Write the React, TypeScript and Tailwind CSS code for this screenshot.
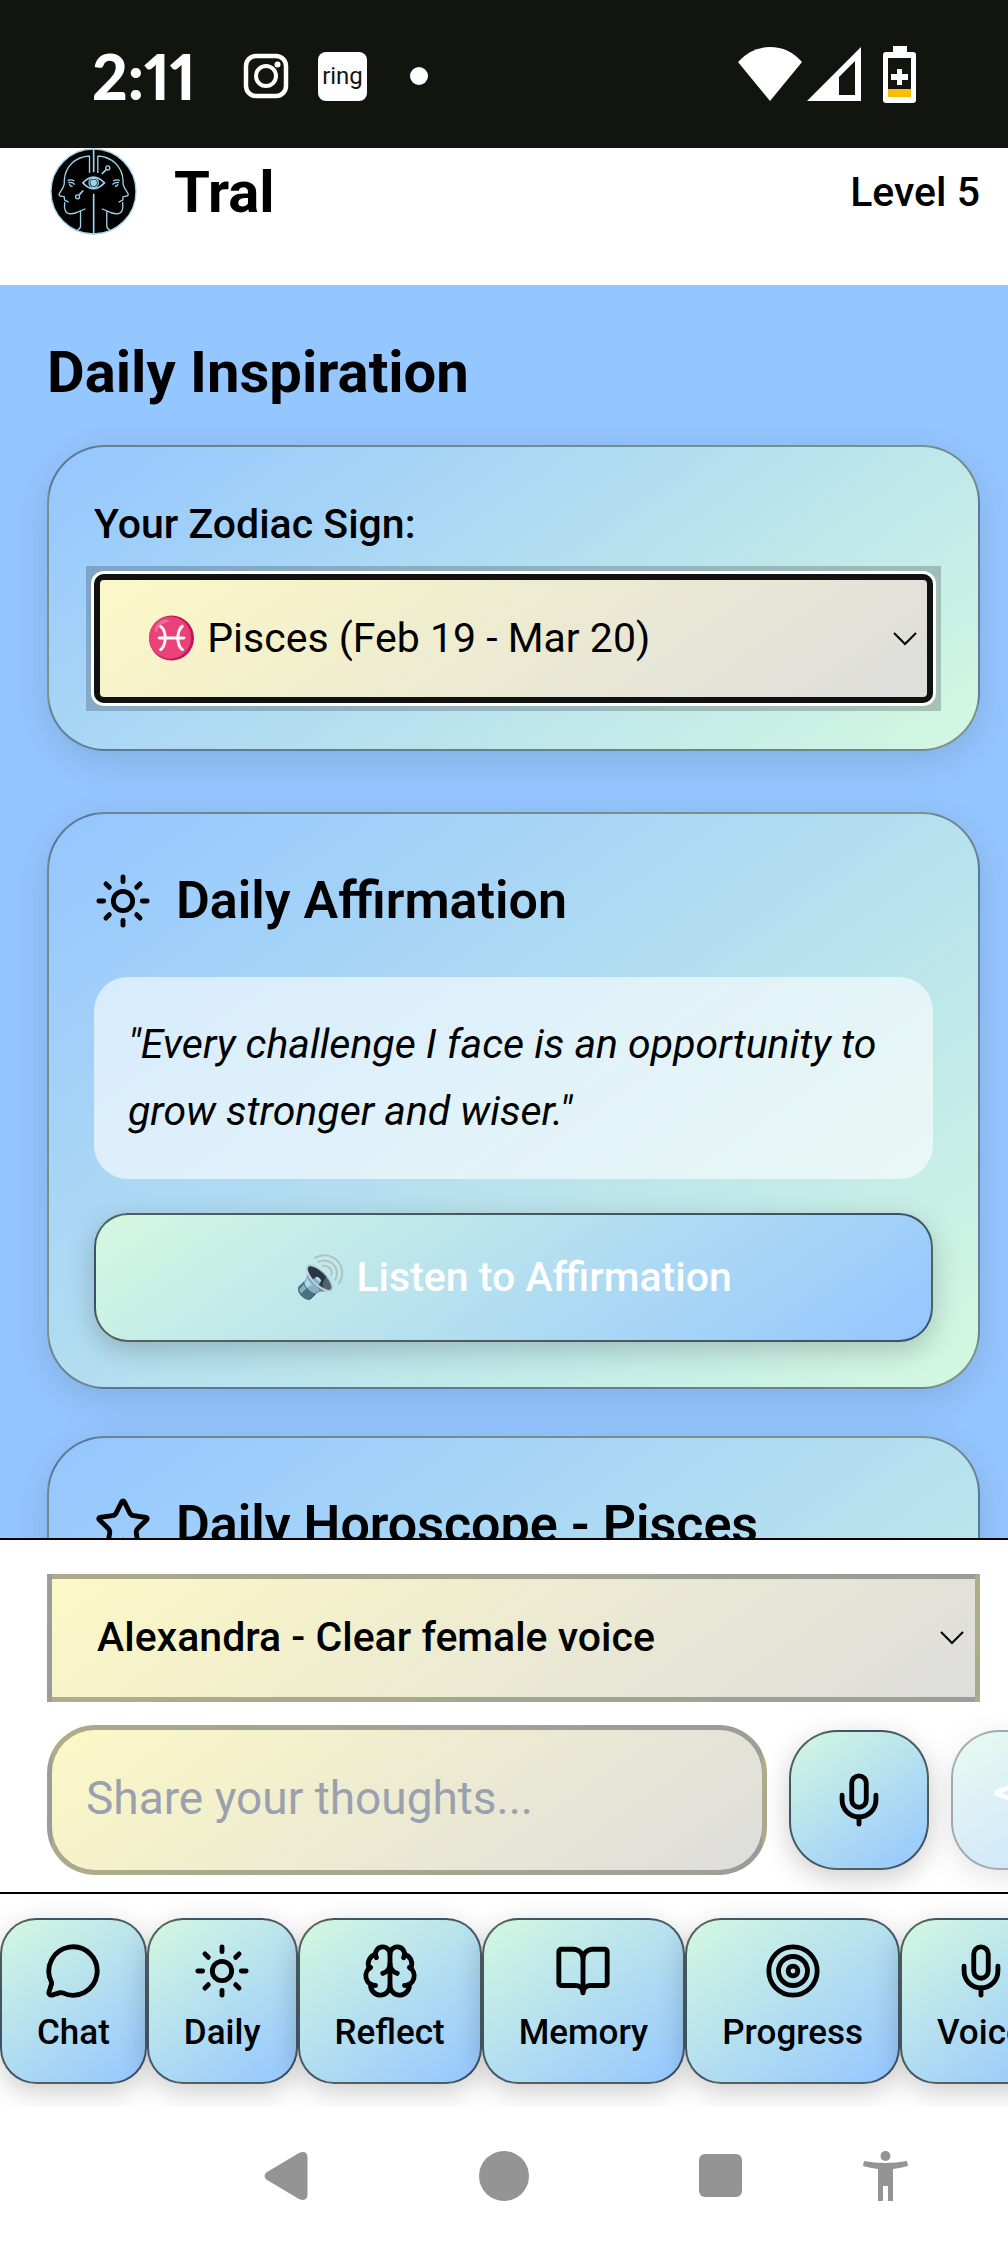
import React from "react";
import {
  BookOpen,
  Brain,
  MessageCircle,
  Mic,
  Send,
  Star,
  Sun,
  Target,
  type LucideIcon,
} from "lucide-react";

const CARD =
  "rounded-[58px] border-2 border-black/40 bg-[linear-gradient(145deg,#94c6ff,#d4f8e0)] px-[45px] pt-[45px] shadow-[0_10px_40px_rgba(0,0,0,0.12)]";
const ACTION =
  "border-2 border-black/60 bg-[linear-gradient(145deg,#d4f8e0,#94c6ff)] shadow-[0_8px_28px_rgba(0,0,0,0.2)]";
const FIELD = "bg-[linear-gradient(145deg,#fcf8c6,#dddddd)]";

function Logo() {
  const half = (
    <g>
      <path d="M118 75V24M118 24C78 26 44 54 42 98M42 98V106C42 120 26 134 26 141C28 147 38 145 42 147L43 157L55 163M43 163C44 174 40 178 45 188C50 201 62 200 78 195C88 191 96 188 106 183M91 190V236C91 242 85 246 80 249" />
      <path d="M52 98C60 94 66 96 72 99M54 104C62 102 68 104 74 110M58 108C58 114 62 116 67 115" />
    </g>
  );
  return (
    <svg viewBox="0 0 260 262" className="size-[87px]" role="img" aria-label="Tral logo">
      <circle cx="130" cy="131" r="128" fill="#000" stroke="#9ed2ea" strokeWidth="4" />
      <g fill="none" stroke="#9ed2ea" strokeWidth="4">
        {half}
        <g transform="matrix(-1 0 0 1 261 0)">{half}</g>
        <path d="M130.500 2V73M130.500 138V260" strokeWidth="5" />
        <path d="M155 78L168 66M99 128L87 141" strokeWidth="5" />
        <circle cx="173" cy="60" r="6" />
        <circle cx="82" cy="147" r="6" />
        <path d="M98 105Q130 70 163 105Q130 140 98 105Z" fill="#000" strokeWidth="5" />
        <circle cx="130.500" cy="105" r="14" />
        <circle cx="130.500" cy="105" r="8" fill="#9ed2ea" />
      </g>
    </svg>
  );
}

function StatusBar() {
  return (
    <div className="flex h-[148px] shrink-0 items-center justify-between bg-[#12140f] pr-[92px] pl-[92px] text-white">
      <div className="flex items-center pt-1">
        <span className="w-[103px] font-['Lato'] text-[62px] leading-[64px] font-black whitespace-nowrap proportional-nums">
          2:11
        </span>
        <svg viewBox="0 0 46 46" className="ml-12 size-[46px]" fill="none" stroke="currentColor" aria-hidden="true">
          <rect x="3" y="3" width="40" height="40" rx="10" strokeWidth="4.500" />
          <circle cx="23" cy="23" r="10" strokeWidth="4" />
          <circle cx="34.500" cy="11.500" r="3" fill="currentColor" stroke="none" />
        </svg>
        <span className="ml-[29px] flex size-[49px] items-center justify-center rounded-lg bg-white font-['Roboto',sans-serif] text-2xl text-[#12140f]">
          ring
        </span>
        <span className="ml-[43px] size-[18px] rounded-full bg-white" />
      </div>
      <div className="flex items-center" aria-hidden="true">
        <svg viewBox="0 0 64 54" className="h-[54px] w-16" fill="currentColor">
          <path d="M0 15Q13 0 32 0T64 15L32 54Z" />
        </svg>
        <svg viewBox="0 0 54 54" className="ml-[5px] size-[54px]" fill="currentColor" fillRule="evenodd">
          <path d="M0 54L54 0V54ZM32 30V48H48V14Z" />
        </svg>
        <svg viewBox="0 0 33 57" className="ml-[22px] h-[57px] w-[33px]">
          <path
            d="M10 0H24V6H30Q33 6 33 9V54Q33 57 30 57H3Q0 57 0 54V9Q0 6 3 6H10ZM5 12V51H28V12Z"
            fill="#fff"
            fillRule="evenodd"
          />
          <path d="M5 43H28V51H5Z" fill="#fbbc04" />
          <path d="M14 23H19V28H25V34H19V39H14V34H8V28H14Z" fill="#fff" />
        </svg>
      </div>
    </div>
  );
}

function Chevron({ className }: { className: string }) {
  return (
    <svg
      viewBox="0 0 24 14"
      className={`pointer-events-none absolute top-1/2 h-[14px] w-6 -translate-y-1/2 ${className}`}
      fill="none"
      stroke="#000"
      strokeWidth="2"
      aria-hidden="true"
    >
      <path d="M1 1L12 12L23 1" />
    </svg>
  );
}

function CardTitle({ icon: Icon, children }: { icon: LucideIcon; children: React.ReactNode }) {
  return (
    <h3 className="flex items-center gap-6 text-[52px] leading-[84px] font-semibold">
      <Icon className="size-[58px]" aria-hidden="true" />
      {children}
    </h3>
  );
}

const TABS: { label: string; icon: LucideIcon }[] = [
  { label: "Chat", icon: MessageCircle },
  { label: "Daily", icon: Sun },
  { label: "Reflect", icon: Brain },
  { label: "Memory", icon: BookOpen },
  { label: "Progress", icon: Target },
  { label: "Voice", icon: Mic },
];

export default function App() {
  return (
    <div className="flex h-screen flex-col overflow-hidden bg-white font-['Roboto','Noto_Color_Emoji',sans-serif] text-black">
      <StatusBar />

      <header className="flex shrink-0 items-center justify-between pr-7 pb-[50px] pl-[50px]">
        <div className="flex items-center gap-[37px]">
          <Logo />
          <h1 className="text-[58px] leading-[68px] font-bold">Tral</h1>
        </div>
        <span className="text-[41px] leading-[64px] font-medium">Level 5</span>
      </header>

      <main className="min-h-0 flex-1 overflow-hidden bg-[#94c6ff] pt-[47px] pr-7 pl-[47px]">
        <h2 className="mb-[33px] text-[58px] leading-[80px] font-bold">Daily Inspiration</h2>

        <section className={`${CARD} mb-[61px] pb-[38px]`}>
          <label htmlFor="zodiac" className="mb-[10px] block text-[41px] leading-[64px] font-medium">
            Your Zodiac Sign:
          </label>
          <div className="relative -mx-2 bg-black/20 p-2">
            <select
              id="zodiac"
              defaultValue="pisces"
              className={`${FIELD} block h-[129px] w-full appearance-none rounded-[10px] border-[6px] border-[#111] px-[46px] text-[41px] shadow-[0_0_0_3px_#fff] outline-none`}
            >
              <option value="pisces">♓ Pisces (Feb 19 - Mar 20)</option>
            </select>
            <Chevron className="right-6" />
          </div>
        </section>

        <section className={`${CARD} mb-[47px] pb-[45px]`}>
          <CardTitle icon={Sun}>Daily Affirmation</CardTitle>
          <p className="my-[34px] rounded-[34px] bg-white/60 p-[34px] text-[41px] leading-[67px] italic">
            "Every challenge I face is an opportunity to grow stronger and wiser."
          </p>
          <button type="button" className={`${ACTION} h-[129px] w-full rounded-[34px] text-[41px] font-medium text-white`}>
            🔊 Listen to Affirmation
          </button>
        </section>

        <section className={`${CARD} min-h-[577px]`}>
          <CardTitle icon={Star}>Daily Horoscope - Pisces</CardTitle>
        </section>
      </main>

      <form className="shrink-0 overflow-hidden border-t-2 border-black pt-[34px] pb-[17px] pl-[47px]" onSubmit={(e) => e.preventDefault()}>
        <div className="relative mr-7 mb-[23px]">
          <select
            aria-label="Voice"
            defaultValue="alexandra"
            className={`${FIELD} block h-32 w-full appearance-none border-[5px] border-black/30 px-[45px] text-[41px] font-medium outline-none`}
          >
            <option value="alexandra">Alexandra - Clear female voice</option>
          </select>
          <Chevron className="right-4" />
        </div>
        <div className="-mr-[83px] flex items-center gap-[22px]">
          <input
            type="text"
            aria-label="Share your thoughts"
            placeholder="Share your thoughts..."
            className={`${FIELD} h-[150px] min-w-0 flex-1 rounded-[48px] border-[5px] border-black/30 px-[34px] pb-1 text-[46px] outline-none placeholder:text-gray-400`}
          />
          <button type="button" aria-label="Record" className={`${ACTION} flex size-[140px] shrink-0 items-center justify-center rounded-[48px]`}>
            <Mic className="size-[58px]" />
          </button>
          <button
            type="submit"
            aria-label="Send"
            disabled
            className={`${ACTION} flex size-[140px] shrink-0 items-center justify-center rounded-[48px] text-white opacity-50`}
          >
            <Send className="size-[58px]" />
          </button>
        </div>
      </form>

      <nav className="flex shrink-0 overflow-hidden border-t-2 border-black pt-6 pb-[23px]">
        {TABS.map(({ label, icon: Icon }) => (
          <button
            key={label}
            type="button"
            className={`${ACTION} flex shrink-0 flex-col items-center gap-2 rounded-[36px] px-[35px] pt-[22px] pb-6 text-[35px] leading-[50px] font-medium`}
          >
            <Icon className="size-[58px]" aria-hidden="true" />
            {label}
          </button>
        ))}
      </nav>

      <div className="grid h-[137px] shrink-0 grid-cols-[177fr_218fr_218fr_214fr_116fr_65fr] items-center justify-items-center text-[#949494]">
        <span />
        <button type="button" aria-label="Back">
          <svg viewBox="0 0 44 50" className="h-[50px] w-11" fill="currentColor">
            <path d="M3 21L35 2Q43 -1 43.500 6V44Q43 51 35 48L3 29Q-2 25 3 21Z" />
          </svg>
        </button>
        <button type="button" aria-label="Home" className="size-[50px] rounded-full bg-current" />
        <button type="button" aria-label="Recent apps" className="size-[43px] rounded-md bg-current" />
        <button type="button" aria-label="Accessibility">
          <svg viewBox="0 0 45 50" className="h-[50px] w-[45px]" fill="currentColor">
            <circle cx="22.500" cy="5" r="5" />
            <path d="M1 10Q22 14 44 10L45 15Q38 17 30 18V50H25V35H20V50H15V18Q7 17 0 15Z" />
          </svg>
        </button>
      </div>
    </div>
  );
}
